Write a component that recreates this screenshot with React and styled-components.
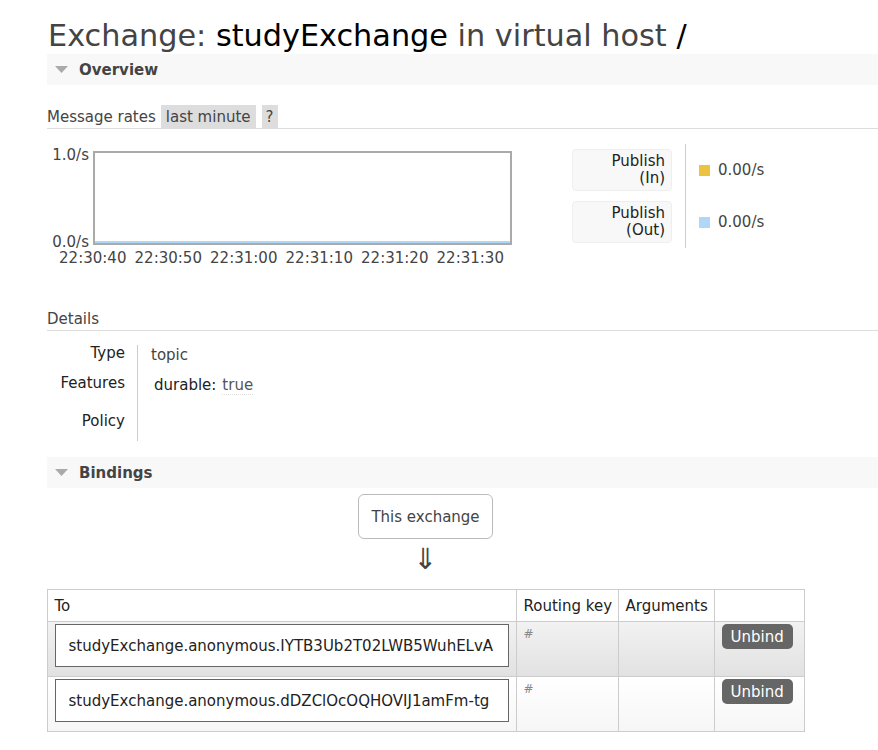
import styled, { createGlobalStyle } from 'styled-components';

const GlobalStyle = createGlobalStyle`
  body {
    margin: 0;
    background: #fff;
    color: #444;
    font-family: "DejaVu Sans", Verdana, sans-serif;
    font-size: 15px;
  }
`;

const Page = styled.div`
  padding: 0 0 20px 47px;
  overflow: hidden;
`;

const Title = styled.h1`
  margin: 0;
  padding: 18px 0 0 1px;
  font-size: 30.3px;
  font-weight: normal;
  line-height: 36px;
  color: #444;
  white-space: nowrap;
`;

const Strong = styled.span`
  color: #000;
`;

const SectionBar = styled.h2`
  display: flex;
  align-items: center;
  gap: 11px;
  height: 31px;
  margin: ${(p) => p.$top || 0}px 0 0;
  padding-left: 8px;
  background: #f8f8f8;
  font-size: 15px;
  font-weight: bold;
  color: #444;
`;

const SubHeading = styled.div`
  display: flex;
  height: 23px;
  line-height: 25px;
  margin-top: ${(p) => p.$top || 0}px;
  border-bottom: 1px solid #ddd;
  color: #444;
`;

const Pill = styled.span`
  height: 23px;
  margin-left: ${(p) => p.$gap}px;
  padding: 0 ${(p) => p.$pad}px;
  background: #ddd;
  color: #444;
`;

const ChartRow = styled.div`
  display: flex;
  align-items: flex-start;
  margin-top: 15px;
`;

const Chart = styled.div`
  display: grid;
  grid-template-columns: 46px 419px;
  padding-top: 7px;
`;

const YAxis = styled.div`
  display: flex;
  flex-direction: column;
  justify-content: space-between;
  margin: -4px 0 -5px;
  padding-right: 4px;
  text-align: right;
  line-height: 16px;
  color: #444;
`;

const XAxis = styled.div`
  grid-column: 1 / span 2;
  display: flex;
  margin-top: 5px;
  padding-left: 8px;
  line-height: 16px;
  color: #444;
`;

const Tick = styled.span`
  flex: 0 0 75.5px;
  text-align: center;
`;

const Legend = styled.div`
  display: flex;
  margin-left: 60px;
`;

const LegendKeys = styled.div`
  display: flex;
  flex-direction: column;
  gap: 10px;
  padding-top: 5px;
`;

const KeyBox = styled.div`
  box-sizing: border-box;
  display: flex;
  align-items: center;
  justify-content: flex-end;
  width: 100px;
  height: 42px;
  padding-right: 6px;
  background: #f8f8f8;
  border: 1px solid #eee;
  border-radius: 4px;
  line-height: 17px;
  text-align: right;
  color: #222;
`;

const LegendValues = styled.div`
  display: flex;
  flex-direction: column;
  gap: 10px;
  margin-left: 13px;
  padding: 5px 0 5px 13px;
  border-left: 1px solid #ccc;
`;

const ValueItem = styled.div`
  display: flex;
  align-items: center;
  gap: 8px;
  height: 42px;
  color: #444;
`;

const Swatch = styled.span`
  width: 11px;
  height: 11px;
  background: ${(p) => p.$color};
`;

const DetailsTable = styled.div`
  margin-top: 14px;
`;

const DetailRow = styled.div`
  display: flex;
  height: ${(p) => p.$h}px;
  line-height: 16px;
`;

const DetailLabel = styled.div`
  box-sizing: border-box;
  width: 91px;
  padding-right: 12px;
  border-right: 1px solid #ccc;
  text-align: right;
  color: #222;
`;

const DetailValue = styled.div`
  padding: 2px 0 0 13px;
  color: #444;
`;

const FeatureKey = styled.span`
  margin-left: 3px;
  margin-right: 6px;
  color: #222;
`;

const FeatureVal = styled.span`
  border-bottom: 1px dotted #ddd;
  color: #555;
`;

const Bindings = styled.div`
  width: 757px;
  display: flex;
  flex-direction: column;
  align-items: center;
`;

const ExchangeBox = styled.div`
  box-sizing: border-box;
  display: flex;
  align-items: center;
  justify-content: center;
  width: 135px;
  height: 45px;
  margin-top: 6px;
  border: 1px solid #bbb;
  border-radius: 6px;
  color: #444;
`;

const Arrow = styled.div`
  height: 40px;
  line-height: 40px;
  margin-bottom: 10px;
  font-size: 29px;
  color: #444;
`;

const Table = styled.table`
  width: 757px;
  border-collapse: collapse;
  border: 1px solid #ccc;
  table-layout: fixed;
`;

const Th = styled.th`
  box-sizing: border-box;
  width: ${(p) => p.$w}px;
  height: 32px;
  padding: 0 7px;
  border: 1px solid #ccc;
  text-align: left;
  font-weight: normal;
  color: #222;
  white-space: nowrap;
`;

const Row = styled.tr`
  background: ${(p) =>
    p.$alt
      ? 'linear-gradient(#f2f2f2, #e1e1e1)'
      : 'linear-gradient(#fff, #f6f6f6)'};
`;

const Td = styled.td`
  box-sizing: border-box;
  height: 55px;
  padding: 2px 7px 0;
  border: 1px solid #ccc;
  vertical-align: top;
`;

const QueueLink = styled.div`
  box-sizing: border-box;
  display: flex;
  align-items: center;
  height: 43px;
  padding-left: 13px;
  background: #fff;
  border: 1px solid #666;
  color: #222;
  white-space: nowrap;
`;

const Key = styled.div`
  padding-top: 3px;
  font-size: 12px;
  color: #888;
`;

const Button = styled.button`
  height: 25px;
  padding: 0 9px;
  border: none;
  border-radius: 5px;
  background: #666;
  color: #fff;
  font-family: inherit;
  font-size: 15px;
`;

function Caret() {
  return (
    <svg width="13" height="7" viewBox="0 0 13 7">
      <polygon points="0,0 13,0 6.5,7" fill="#aaa" />
    </svg>
  );
}

function Plot() {
  return (
    <svg width="419" height="94" viewBox="0 0 419 94">
      <rect x="1" y="1" width="417" height="92" fill="#fff" stroke="#aaa" strokeWidth="2" />
      <line x1="2" y1="91" x2="417" y2="91" stroke="#afd8f8" strokeWidth="2" />
    </svg>
  );
}

const ticks = ['22:30:40', '22:30:50', '22:31:00', '22:31:10', '22:31:20', '22:31:30'];

const bindings = [
  'studyExchange.anonymous.IYTB3Ub2T02LWB5WuhELvA',
  'studyExchange.anonymous.dDZClOcOQHOVIJ1amFm-tg',
];

export default function App() {
  return (
    <Page>
      <GlobalStyle />
      <Title>
        Exchange: <Strong>studyExchange</Strong> in virtual host <Strong>/</Strong>
      </Title>

      <SectionBar>
        <Caret />
        Overview
      </SectionBar>

      <SubHeading $top={20}>
        Message rates
        <Pill $gap={5} $pad={5}>last minute</Pill>
        <Pill $gap={6} $pad={4}>?</Pill>
      </SubHeading>

      <ChartRow>
        <Chart>
          <YAxis>
            <span>1.0/s</span>
            <span>0.0/s</span>
          </YAxis>
          <Plot />
          <XAxis>
            {ticks.map((t) => (
              <Tick key={t}>{t}</Tick>
            ))}
          </XAxis>
        </Chart>

        <Legend>
          <LegendKeys>
            <KeyBox>
              Publish
              <br />
              (In)
            </KeyBox>
            <KeyBox>
              Publish
              <br />
              (Out)
            </KeyBox>
          </LegendKeys>
          <LegendValues>
            <ValueItem>
              <Swatch $color="#edc240" />
              0.00/s
            </ValueItem>
            <ValueItem>
              <Swatch $color="#afd8f8" />
              0.00/s
            </ValueItem>
          </LegendValues>
        </Legend>
      </ChartRow>

      <SubHeading $top={41}>Details</SubHeading>
      <DetailsTable>
        <DetailRow $h={30}>
          <DetailLabel>Type</DetailLabel>
          <DetailValue>topic</DetailValue>
        </DetailRow>
        <DetailRow $h={38}>
          <DetailLabel>Features</DetailLabel>
          <DetailValue>
            <FeatureKey>durable:</FeatureKey>
            <FeatureVal>true</FeatureVal>
          </DetailValue>
        </DetailRow>
        <DetailRow $h={28}>
          <DetailLabel>Policy</DetailLabel>
          <DetailValue />
        </DetailRow>
      </DetailsTable>

      <SectionBar $top={16}>
        <Caret />
        Bindings
      </SectionBar>

      <Bindings>
        <ExchangeBox>This exchange</ExchangeBox>
        <Arrow>⇓</Arrow>
        <Table>
          <thead>
            <tr>
              <Th $w={469}>To</Th>
              <Th $w={102}>Routing key</Th>
              <Th $w={96}>Arguments</Th>
              <Th $w={90} />
            </tr>
          </thead>
          <tbody>
            {bindings.map((name, i) => (
              <Row key={name} $alt={i === 0}>
                <Td>
                  <QueueLink>{name}</QueueLink>
                </Td>
                <Td>
                  <Key>#</Key>
                </Td>
                <Td />
                <Td>
                  <Button>Unbind</Button>
                </Td>
              </Row>
            ))}
          </tbody>
        </Table>
      </Bindings>
    </Page>
  );
}
